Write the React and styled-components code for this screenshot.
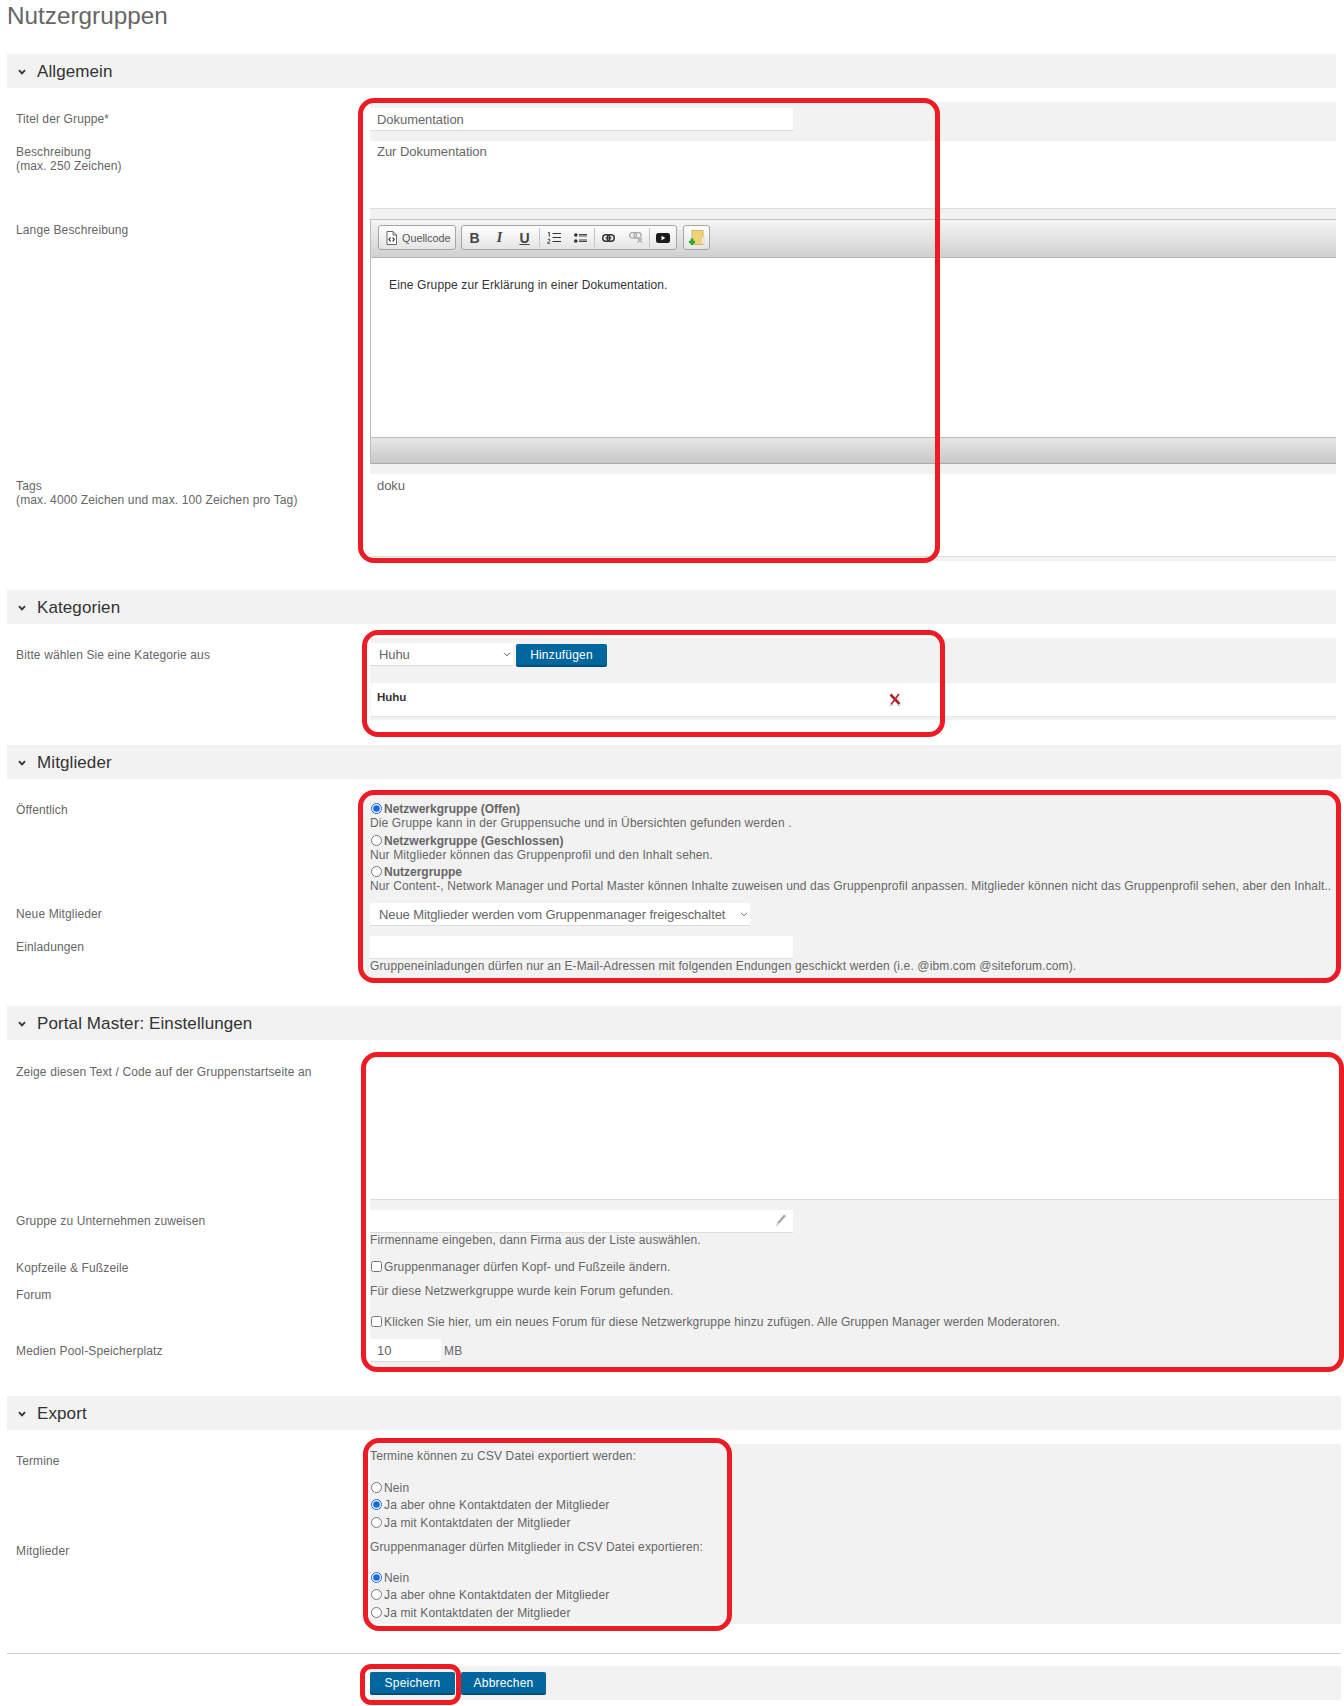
import styled, { createGlobalStyle } from 'styled-components';

const chevronImage = `url("data:image/svg+xml,%3Csvg xmlns='http://www.w3.org/2000/svg' width='8' height='5'%3E%3Cpath d='M1 .8 L4 3.8 L7 .8' fill='none' stroke='%23666' stroke-width='1'/%3E%3C/svg%3E")`;

const GlobalStyle = createGlobalStyle`
  html, body {
    margin: 0;
    padding: 0;
    background: #fff;
  }
  body {
    font-family: "Liberation Sans", Arial, sans-serif;
    font-size: 12px;
    line-height: 14px;
    letter-spacing: 0.13px;
    color: #666;
  }
`;

const Page = styled.div`
  width: 1337px;
  height: 1706px;
  padding-left: 7px;
`;

const Title = styled.h1`
  margin: 0;
  height: 54px;
  font-size: 24.3px;
  line-height: 31px;
  font-weight: normal;
  letter-spacing: 0;
  color: #666;
`;

const Section = styled.section`
  width: ${props => props.$width || 1334}px;
  margin-bottom: ${props => props.$gap || 0}px;
`;

const SectionHeader = styled.h2`
  display: flex;
  align-items: center;
  box-sizing: border-box;
  height: 34px;
  margin: 0 0 14px;
  padding-top: 2px;
  background: #f2f2f2;
  font-size: 17px;
  font-weight: normal;
  letter-spacing: 0.1px;
  color: #333;

  svg {
    margin: 0 11px 0 11px;
  }
`;

const FormBody = styled.div`
  position: relative;
`;

const Row = styled.div`
  display: grid;
  grid-template-columns: ${props => props.$labelWidth || 363}px 1fr;
  height: ${props => props.$height}px;
`;

const Label = styled.div`
  padding: ${props => props.$top || 0}px 0 0 9px;
`;

const Field = styled.div`
  background: #f2f2f2;
  padding-top: ${props => props.$top || 0}px;
  padding-left: ${props => props.$inset || 0}px;
  min-width: 0;
`;

const TextInput = styled.input`
  display: block;
  box-sizing: border-box;
  width: ${props => props.$width || 423}px;
  height: 23px;
  padding: 0 7px;
  border: 0;
  border-bottom: 1px solid #ddd;
  background: #fff;
  font: 13px "Liberation Sans", Arial, sans-serif;
  letter-spacing: -0.05px;
  color: #666;
  outline: none;
`;

const TextArea = styled.textarea`
  display: block;
  box-sizing: border-box;
  width: 100%;
  height: ${props => props.$height}px;
  padding: ${props => props.$pad || 4}px 7px;
  border: 0;
  border-bottom: 1px solid #ddd;
  background: #fff;
  font: 13px/14px "Liberation Sans", Arial, sans-serif;
  letter-spacing: -0.05px;
  color: #666;
  resize: none;
  outline: none;
`;

const Select = styled.select`
  display: block;
  box-sizing: border-box;
  appearance: none;
  width: ${props => props.$width}px;
  height: 23px;
  padding: 1px 0 0 9px;
  border: 0;
  border-bottom: 1px solid #ddd;
  border-radius: 0;
  background: #fff ${chevronImage} no-repeat right 2px center;
  font: 13px "Liberation Sans", Arial, sans-serif;
  letter-spacing: -0.1px;
  color: #666;
  outline: none;
`;

const Button = styled.button`
  box-sizing: border-box;
  width: ${props => props.$width || 85}px;
  height: 23px;
  margin-top: ${props => props.$top || 0}px;
  padding: 0;
  border: 0;
  border-bottom: 2px solid #004f7c;
  border-radius: 2px;
  background: #00679e;
  font: 12px "Liberation Sans", Arial, sans-serif;
  letter-spacing: 0.2px;
  color: #fff;
`;

const Highlight = styled.div`
  position: absolute;
  box-sizing: border-box;
  top: ${props => props.$top}px;
  bottom: ${props => props.$bottom}px;
  left: ${props => props.$left}px;
  ${props => (props.$width ? `width: ${props.$width}px;` : `right: ${props.$right}px;`)}
  border: 5px solid #ed1c24;
  border-radius: ${props => props.$radius || 16}px;
  pointer-events: none;
`;

const Editor = styled.div`
  height: 245px;
  box-sizing: border-box;
  border-left: 1px solid #bbb;
  display: flex;
  flex-direction: column;
`;

const Toolbar = styled.div`
  display: flex;
  align-items: flex-start;
  height: 39px;
  box-sizing: border-box;
  padding: 5px 0 0 7px;
  border-top: 1px solid #c4c4c4;
  border-bottom: 1px solid #b6b6b6;
  background: linear-gradient(#f5f5f5, #cfd1cf);
`;

const ToolGroup = styled.div`
  display: flex;
  align-items: center;
  box-sizing: border-box;
  height: 25px;
  margin-right: ${props => props.$gap || 0}px;
  border: 1px solid #a6a6a6;
  border-radius: 3px;
  background: linear-gradient(#fff, #e4e4e4);
`;

const ToolButton = styled.span`
  display: flex;
  align-items: center;
  justify-content: center;
  box-sizing: border-box;
  width: ${props => props.$width || 25}px;
  height: 23px;
  font: ${props => props.$font || 'bold 14px "Liberation Sans", Arial, sans-serif'};
  color: #444;
  text-decoration: ${props => (props.$underline ? 'underline' : 'none')};
`;

const SourceButton = styled(ToolButton)`
  justify-content: flex-start;
  gap: 5px;
  padding-left: 7px;
  font: 10.8px "Liberation Sans", Arial, sans-serif;
  letter-spacing: 0;
  color: #555;
`;

const ToolDivider = styled.span`
  width: 1px;
  height: 19px;
  margin-left: ${props => props.$left || 0}px;
  background: #c4c4c4;
`;

const EditorContent = styled.div`
  flex: 1;
  padding: 20px 0 0 18px;
  background: #fff;
  font-size: 12px;
  color: #333;
`;

const EditorFooter = styled.div`
  height: 27px;
  box-sizing: border-box;
  border-top: 1px solid #bbb;
  border-bottom: 1px solid #aaa;
  background: linear-gradient(#e6e6e6, #c8c8c8);
`;

const Controls = styled.div`
  display: flex;
  align-items: flex-start;
  gap: ${props => props.$gap || 3}px;
`;

const CategoryItem = styled.div`
  display: flex;
  align-items: center;
  box-sizing: border-box;
  height: 34px;
  margin: 16px 0 0 1px;
  padding-left: 6px;
  border-bottom: 1px solid #e6e6e6;
  background: #fff;
`;

const CategoryName = styled.strong`
  flex: 0 0 511px;
  margin-top: -6px;
  font-size: 11.5px;
  letter-spacing: 0;
  color: #333;
`;

const OptionList = styled.div`
  display: flex;
  flex-direction: column;
  gap: 3.5px;
`;

const OptionTitle = styled.b`
  letter-spacing: 0;
`;

const Radio = styled.input.attrs({ type: 'radio' })`
  width: 11px;
  height: 11px;
  margin: 0 2px 0 1px;
  vertical-align: -1px;
  accent-color: #1668e3;
`;

const CheckBox = styled.input.attrs({ type: 'checkbox' })`
  width: 11px;
  height: 11px;
  margin: 0 2px 0 1px;
  vertical-align: -1px;
`;

const Choice = styled.label`
  display: block;
  height: ${props => props.$height || 14}px;
`;

const Hint = styled.div`
  margin-top: ${props => props.$top || 0}px;
`;

const InputWithIcon = styled.div`
  position: relative;
  width: 423px;

  svg {
    position: absolute;
    top: 3px;
    right: 6px;
  }
`;

const InlineRow = styled.div`
  display: flex;
  align-items: center;
  gap: 3px;
`;

const Rule = styled.hr`
  margin: 29px 0 12px;
  border: 0;
  border-top: 1px solid #ccc;
`;

const Chevron = () => (
  <svg width="8" height="6" viewBox="0 0 8 6">
    <path d="M1 1.2 L4 4.4 L7 1.2" fill="none" stroke="#333" strokeWidth="1.8" />
  </svg>
);

const SourceIcon = () => (
  <svg width="11" height="14" viewBox="0 0 11 14">
    <path d="M1 .5 H7 L10.5 4 V13.5 H1 Z" fill="#fff" stroke="#666" />
    <path d="M7 .5 V4 H10.5" fill="none" stroke="#666" />
    <path d="M4.6 6.5 L3 8.5 L4.6 10.5 M6.6 6.5 L8.2 8.5 L6.6 10.5" fill="none" stroke="#222" strokeWidth="1.2" />
  </svg>
);

const OrderedIcon = () => (
  <svg width="14" height="12" viewBox="0 0 14 12">
    <path d="M1 .8 L2.3 .3 V4.6 M.6 7.6 C1.2 6.6 3.2 6.8 2.9 8.2 C2.7 9.2 1 9.8 .6 11.2 H3.2" fill="none" stroke="#333" strokeWidth="1" />
    <path d="M5.5 1.5 H14 M5.5 5.5 H14 M5.5 9.5 H14" stroke="#333" strokeWidth="1.2" />
  </svg>
);

const BulletIcon = () => (
  <svg width="13" height="10" viewBox="0 0 13 10">
    <circle cx="1.8" cy="2" r="1.8" fill="#333" />
    <circle cx="1.8" cy="8" r="1.8" fill="#333" />
    <path d="M5 1.5 H13 M5 3 H13 M5 7 H13 M5 8.5 H13" stroke="#333" strokeWidth=".9" />
  </svg>
);

const LinkIcon = ({ color = '#333' }) => (
  <svg width="13" height="8" viewBox="0 0 13 8">
    <rect x=".8" y=".8" width="7" height="6.4" rx="3" fill="none" stroke={color} strokeWidth="1.5" />
    <rect x="5.2" y=".8" width="7" height="6.4" rx="3" fill="none" stroke={color} strokeWidth="1.5" />
    <path d="M3.5 4 H9.5" stroke={color} strokeWidth="1.2" />
  </svg>
);

const UnlinkIcon = () => (
  <svg width="14" height="11" viewBox="0 0 14 11">
    <rect x=".6" y=".6" width="7" height="5.6" rx="2.8" fill="none" stroke="#aaa" strokeWidth="1.3" />
    <rect x="5" y=".6" width="7" height="5.6" rx="2.8" fill="none" stroke="#aaa" strokeWidth="1.3" />
    <path d="M8.5 6 L13 10.5 M13 6 L8.5 10.5" stroke="#aaa" strokeWidth="1.2" />
  </svg>
);

const VideoIcon = () => (
  <svg width="14" height="10" viewBox="0 0 14 10">
    <rect width="14" height="10" rx="2.5" fill="#1a1a1a" />
    <path d="M5.5 2.8 L9.3 5 L5.5 7.2 Z" fill="#fff" />
  </svg>
);

const FolderIcon = () => (
  <svg width="16" height="16" viewBox="0 0 16 16">
    <rect x="3" y=".5" width="11" height="14" fill="#f0d27a" stroke="#d9b75c" />
    <rect x="12.5" y="7" width="2.5" height="7" fill="#f8f2d8" stroke="#d9c48a" strokeWidth=".6" />
    <path d="M3 8.5 V15 M0 12 H6" stroke="#22a82e" strokeWidth="2.6" />
  </svg>
);

const RemoveIcon = () => (
  <svg width="14" height="13" viewBox="0 0 14 13">
    <path d="M2.5 1.5 L11.5 11" stroke="#a8232c" strokeWidth="2.6" />
    <path d="M11 1 L3 11.5" stroke="#b92a34" strokeWidth="1.8" />
    <path d="M1 12.5 H5 M9 12.5 H13" stroke="#d8d8d8" strokeWidth="1" />
  </svg>
);

const PencilIcon = () => (
  <svg width="13" height="15" viewBox="0 0 13 15">
    <path d="M10 1.5 L12 3 L5 11 L3 9.6 Z" fill="#aaa" />
    <path d="M3 10 L5 11.4 L1.5 13.5 Z" fill="#ccc" />
  </svg>
);

const SectionTitle = ({ children }) => (
  <SectionHeader>
    <Chevron />
    {children}
  </SectionHeader>
);

export default function App() {
  return (
    <Page>
      <GlobalStyle />
      <Title>Nutzergruppen</Title>

      <Section $width={1329} $gap={29}>
        <SectionTitle>Allgemein</SectionTitle>
        <FormBody>
          <Row $height={39}>
            <Label $top={10}>Titel der Gruppe*</Label>
            <Field $top={6}>
              <TextInput defaultValue="Dokumentation" />
            </Field>
          </Row>
          <Row $height={78}>
            <Label $top={4}>Beschreibung<br />(max. 250 Zeichen)</Label>
            <Field>
              <TextArea $height={68} defaultValue="Zur Dokumentation" />
            </Field>
          </Row>
          <Row $height={255}>
            <Label $top={4}>Lange Beschreibung</Label>
            <Field>
              <Editor>
                <Toolbar>
                  <ToolGroup $gap={5}>
                    <SourceButton $width={76}><SourceIcon />Quellcode</SourceButton>
                  </ToolGroup>
                  <ToolGroup $gap={6}>
                    <ToolButton>B</ToolButton>
                    <ToolButton $font='italic bold 14px "Liberation Serif", serif'>I</ToolButton>
                    <ToolButton $underline>U</ToolButton>
                    <ToolDivider $left={2} />
                    <ToolButton $width={27}><OrderedIcon /></ToolButton>
                    <ToolButton $width={27}><BulletIcon /></ToolButton>
                    <ToolDivider />
                    <ToolButton $width={27}><LinkIcon /></ToolButton>
                    <ToolButton $width={27}><UnlinkIcon /></ToolButton>
                    <ToolDivider />
                    <ToolButton $width={26}><VideoIcon /></ToolButton>
                  </ToolGroup>
                  <ToolGroup>
                    <ToolButton $width={25}><FolderIcon /></ToolButton>
                  </ToolGroup>
                </Toolbar>
                <EditorContent>Eine Gruppe zur Erklärung in einer Dokumentation.</EditorContent>
                <EditorFooter />
              </Editor>
            </Field>
          </Row>
          <Row $height={87}>
            <Label $top={5}>Tags<br />(max. 4000 Zeichen und max. 100 Zeichen pro Tag)</Label>
            <Field>
              <TextArea $height={83} $pad={5} defaultValue="doku" />
            </Field>
          </Row>
          <Highlight $top={-4} $left={351} $width={582} $bottom={-2} />
        </FormBody>
      </Section>

      <Section $width={1329} $gap={25}>
        <SectionTitle>Kategorien</SectionTitle>
        <FormBody>
          <Row $height={82}>
            <Label $top={10}>Bitte wählen Sie eine Kategorie aus</Label>
            <Field $top={5}>
              <Controls>
                <Select $width={143}>
                  <option>Huhu</option>
                </Select>
                <Button $width={91} $top={1}>Hinzufügen</Button>
              </Controls>
              <CategoryItem>
                <CategoryName>Huhu</CategoryName>
                <RemoveIcon />
              </CategoryItem>
            </Field>
          </Row>
          <Highlight $top={-8} $left={355} $width={583} $bottom={-17} />
        </FormBody>
      </Section>

      <Section $gap={28}>
        <SectionTitle>Mitglieder</SectionTitle>
        <FormBody>
          <Row $height={105} $labelWidth={356}>
            <Label $top={10}>Öffentlich</Label>
            <Field $top={9} $inset={7}>
              <OptionList>
                <div>
                  <Choice>
                    <Radio name="visibility" defaultChecked /><OptionTitle>Netzwerkgruppe (Offen)</OptionTitle>
                  </Choice>
                  Die Gruppe kann in der Gruppensuche und in Übersichten gefunden werden .
                </div>
                <div>
                  <Choice>
                    <Radio name="visibility" /><OptionTitle>Netzwerkgruppe (Geschlossen)</OptionTitle>
                  </Choice>
                  Nur Mitglieder können das Gruppenprofil und den Inhalt sehen.
                </div>
                <div>
                  <Choice>
                    <Radio name="visibility" /><OptionTitle>Nutzergruppe</OptionTitle>
                  </Choice>
                  Nur Content-, Network Manager und Portal Master können Inhalte zuweisen und das Gruppenprofil anpassen. Mitglieder können nicht das Gruppenprofil sehen, aber den Inhalt..
                </div>
              </OptionList>
            </Field>
          </Row>
          <Row $height={33} $labelWidth={356}>
            <Label $top={9}>Neue Mitglieder</Label>
            <Field $top={5} $inset={7}>
              <Select $width={380}>
                <option>Neue Mitglieder werden vom Gruppenmanager freigeschaltet</option>
              </Select>
            </Field>
          </Row>
          <Row $height={47} $labelWidth={356}>
            <Label $top={9}>Einladungen</Label>
            <Field $top={5} $inset={7}>
              <TextInput />
              <Hint>Gruppeneinladungen dürfen nur an E-Mail-Adressen mit folgenden Endungen geschickt werden (i.e. @ibm.com @siteforum.com).</Hint>
            </Field>
          </Row>
          <Highlight $top={-3} $left={351} $right={0} $bottom={-5} />
        </FormBody>
      </Section>

      <Section $gap={25}>
        <SectionTitle>Portal Master: Einstellungen</SectionTitle>
        <FormBody>
          <Row $height={151}>
            <Label $top={11}>Zeige diesen Text / Code auf der Gruppenstartseite an</Label>
            <Field $top={4}>
              <TextArea $height={142} />
            </Field>
          </Row>
          <Row $height={50}>
            <Label $top={9}>Gruppe zu Unternehmen zuweisen</Label>
            <Field $top={5}>
              <InputWithIcon>
                <TextInput />
                <PencilIcon />
              </InputWithIcon>
              <Hint>Firmenname eingeben, dann Firma aus der Liste auswählen.</Hint>
            </Field>
          </Row>
          <Row $height={25}>
            <Label $top={6}>Kopfzeile &amp; Fußzeile</Label>
            <Field $top={5}>
              <Choice><CheckBox />Gruppenmanager dürfen Kopf- und Fußzeile ändern.</Choice>
            </Field>
          </Row>
          <Row $height={55}>
            <Label $top={8}>Forum</Label>
            <Field $top={4}>
              Für diese Netzwerkgruppe wurde kein Forum gefunden.
              <Hint $top={17}>
                <Choice><CheckBox />Klicken Sie hier, um ein neues Forum für diese Netzwerkgruppe hinzu zufügen. Alle Gruppen Manager werden Moderatoren.</Choice>
              </Hint>
            </Field>
          </Row>
          <Row $height={36}>
            <Label $top={9}>Medien Pool-Speicherplatz</Label>
            <Field $top={4}>
              <InlineRow>
                <TextInput $width={71} defaultValue="10" />
                MB
              </InlineRow>
            </Field>
          </Row>
          <Highlight $top={-2} $left={354} $right={-3} $bottom={-1} />
        </FormBody>
      </Section>

      <Section>
        <SectionTitle>Export</SectionTitle>
        <FormBody>
          <Row $height={91}>
            <Label $top={10}>Termine</Label>
            <Field $top={5}>
              Termine können zu CSV Datei exportiert werden:
              <Hint $top={18}>
                <Choice $height={17}><Radio name="dates" />Nein</Choice>
                <Choice $height={18}><Radio name="dates" defaultChecked />Ja aber ohne Kontaktdaten der Mitglieder</Choice>
                <Choice><Radio name="dates" />Ja mit Kontaktdaten der Mitglieder</Choice>
              </Hint>
            </Field>
          </Row>
          <Row $height={89}>
            <Label $top={9}>Mitglieder</Label>
            <Field $top={5}>
              Gruppenmanager dürfen Mitglieder in CSV Datei exportieren:
              <Hint $top={17}>
                <Choice $height={17}><Radio name="members" defaultChecked />Nein</Choice>
                <Choice $height={18}><Radio name="members" />Ja aber ohne Kontaktdaten der Mitglieder</Choice>
                <Choice><Radio name="members" />Ja mit Kontaktdaten der Mitglieder</Choice>
              </Hint>
            </Field>
          </Row>
          <Highlight $top={-6} $left={356} $width={369} $bottom={-7} />
        </FormBody>
        <Rule />
        <FormBody>
          <Row $height={34}>
            <div />
            <Field $top={6}>
              <Controls $gap={6}>
                <Button>Speichern</Button>
                <Button>Abbrechen</Button>
              </Controls>
            </Field>
          </Row>
          <Highlight $top={-2} $left={353} $width={101} $bottom={-5} $radius={11} />
        </FormBody>
      </Section>
    </Page>
  );
}
